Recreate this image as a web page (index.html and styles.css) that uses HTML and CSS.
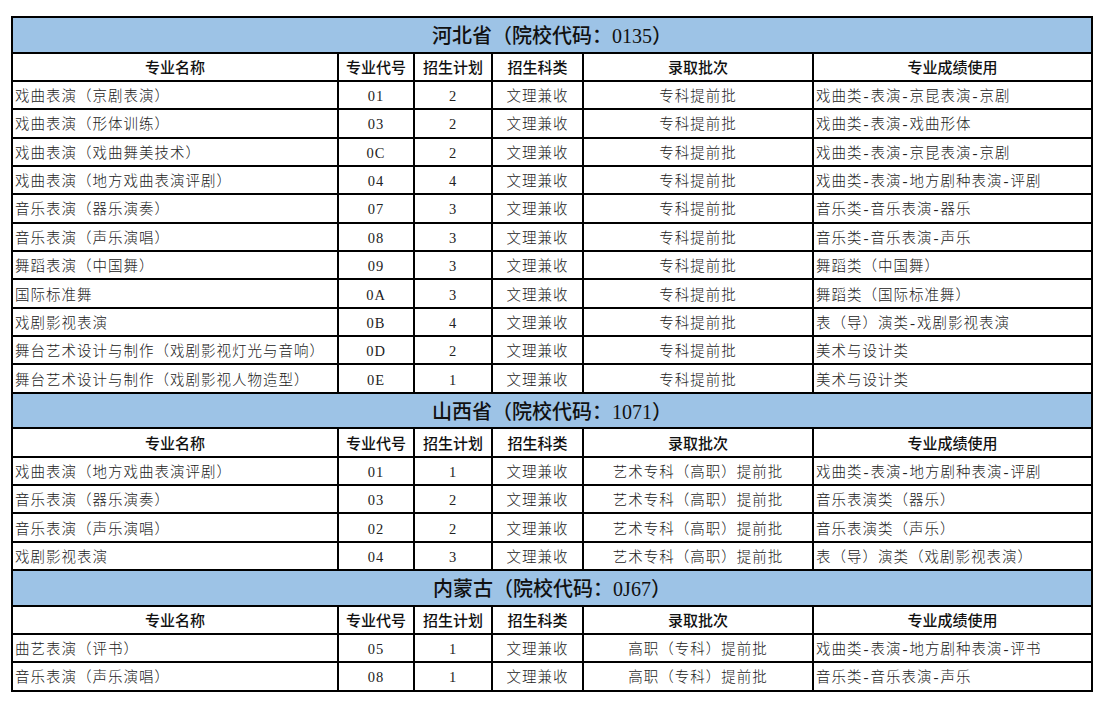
FILE: index.html
```html
<!DOCTYPE html>
<html lang="zh-CN">
<head>
<meta charset="utf-8">
<title>招生计划</title>
<link rel="stylesheet" href="styles.css">
</head>
<body>
<table class="plan">
  <colgroup>
    <col class="c1"><col class="c2"><col class="c3"><col class="c4"><col class="c5"><col class="c6">
  </colgroup>
  <tbody>
    <tr class="prov"><td colspan="6">河北省（院校代码：0135）</td></tr>
    <tr class="head"><td>专业名称</td><td>专业代号</td><td>招生计划</td><td>招生科类</td><td>录取批次</td><td>专业成绩使用</td></tr>
    <tr><td class="l">戏曲表演（京剧表演）</td><td>01</td><td>2</td><td>文理兼收</td><td>专科提前批</td><td class="l">戏曲类<span class="d">-</span>表演<span class="d">-</span>京昆表演<span class="d">-</span>京剧</td></tr>
    <tr><td class="l">戏曲表演（形体训练）</td><td>03</td><td>2</td><td>文理兼收</td><td>专科提前批</td><td class="l">戏曲类<span class="d">-</span>表演<span class="d">-</span>戏曲形体</td></tr>
    <tr><td class="l">戏曲表演（戏曲舞美技术）</td><td>0C</td><td>2</td><td>文理兼收</td><td>专科提前批</td><td class="l">戏曲类<span class="d">-</span>表演<span class="d">-</span>京昆表演<span class="d">-</span>京剧</td></tr>
    <tr><td class="l">戏曲表演（地方戏曲表演评剧）</td><td>04</td><td>4</td><td>文理兼收</td><td>专科提前批</td><td class="l">戏曲类<span class="d">-</span>表演<span class="d">-</span>地方剧种表演<span class="d">-</span>评剧</td></tr>
    <tr><td class="l">音乐表演（器乐演奏）</td><td>07</td><td>3</td><td>文理兼收</td><td>专科提前批</td><td class="l">音乐类<span class="d">-</span>音乐表演<span class="d">-</span>器乐</td></tr>
    <tr><td class="l">音乐表演（声乐演唱）</td><td>08</td><td>3</td><td>文理兼收</td><td>专科提前批</td><td class="l">音乐类<span class="d">-</span>音乐表演<span class="d">-</span>声乐</td></tr>
    <tr><td class="l">舞蹈表演（中国舞）</td><td>09</td><td>3</td><td>文理兼收</td><td>专科提前批</td><td class="l">舞蹈类（中国舞）</td></tr>
    <tr><td class="l">国际标准舞</td><td>0A</td><td>3</td><td>文理兼收</td><td>专科提前批</td><td class="l">舞蹈类（国际标准舞）</td></tr>
    <tr><td class="l">戏剧影视表演</td><td>0B</td><td>4</td><td>文理兼收</td><td>专科提前批</td><td class="l">表（导）演类<span class="d">-</span>戏剧影视表演</td></tr>
    <tr><td class="l">舞台艺术设计与制作（戏剧影视灯光与音响）</td><td>0D</td><td>2</td><td>文理兼收</td><td>专科提前批</td><td class="l">美术与设计类</td></tr>
    <tr><td class="l">舞台艺术设计与制作（戏剧影视人物造型）</td><td>0E</td><td>1</td><td>文理兼收</td><td>专科提前批</td><td class="l">美术与设计类</td></tr>
    <tr class="prov"><td colspan="6">山西省（院校代码：1071）</td></tr>
    <tr class="head"><td>专业名称</td><td>专业代号</td><td>招生计划</td><td>招生科类</td><td>录取批次</td><td>专业成绩使用</td></tr>
    <tr><td class="l">戏曲表演（地方戏曲表演评剧）</td><td>01</td><td>1</td><td>文理兼收</td><td>艺术专科（高职）提前批</td><td class="l">戏曲类<span class="d">-</span>表演<span class="d">-</span>地方剧种表演<span class="d">-</span>评剧</td></tr>
    <tr><td class="l">音乐表演（器乐演奏）</td><td>03</td><td>2</td><td>文理兼收</td><td>艺术专科（高职）提前批</td><td class="l">音乐表演类（器乐）</td></tr>
    <tr><td class="l">音乐表演（声乐演唱）</td><td>02</td><td>2</td><td>文理兼收</td><td>艺术专科（高职）提前批</td><td class="l">音乐表演类（声乐）</td></tr>
    <tr><td class="l">戏剧影视表演</td><td>04</td><td>3</td><td>文理兼收</td><td>艺术专科（高职）提前批</td><td class="l">表（导）演类（戏剧影视表演）</td></tr>
    <tr class="prov"><td colspan="6">内蒙古（院校代码：0J67）</td></tr>
    <tr class="head"><td>专业名称</td><td>专业代号</td><td>招生计划</td><td>招生科类</td><td>录取批次</td><td>专业成绩使用</td></tr>
    <tr><td class="l">曲艺表演（评书）</td><td>05</td><td>1</td><td>文理兼收</td><td>高职（专科）提前批</td><td class="l">戏曲类<span class="d">-</span>表演<span class="d">-</span>地方剧种表演<span class="d">-</span>评书</td></tr>
    <tr><td class="l">音乐表演（声乐演唱）</td><td>08</td><td>1</td><td>文理兼收</td><td>高职（专科）提前批</td><td class="l">音乐类<span class="d">-</span>音乐表演<span class="d">-</span>声乐</td></tr>
  </tbody>
</table>
</body>
</html>
```
FILE: styles.css
```css
html, body {
  margin: 0;
  padding: 0;
  background: #ffffff;
}
body {
  padding: 16px 0 0 11px;
}
.plan {
  border-collapse: collapse;
  table-layout: fixed;
  width: 1082px;
  font-family: "Liberation Serif", "Noto Sans CJK SC", serif;
  font-size: 14.5px;
  letter-spacing: 1px;
  font-weight: 300;
  color: #222;
  text-spacing-trim: space-all;
}
.c1 { width: 326px; }
.c2 { width: 76px; }
.c3 { width: 78px; }
.c4 { width: 91px; }
.c5 { width: 230px; }
.c6 { width: 279px; }
.plan td {
  border: 2px solid #000;
  height: 28.35px;
  padding: 2px 2px 0;
  text-align: center;
  white-space: nowrap;
  overflow: hidden;
  line-height: 20px;
  box-sizing: border-box;
}
.plan td.l {
  text-align: left;
}
.plan .d {
  font-size: 15px;
  margin: 0 1px;
}
.prov td {
  height: 35.6px;
  background: #9dc3e6;
  font-size: 20px;
  letter-spacing: 0;
  font-weight: 500;
  color: #111;
  padding-top: 2px;
  text-spacing-trim: normal;
}
.head td {
  font-family: "Noto Sans CJK SC", sans-serif;
  font-size: 15px;
  letter-spacing: 0;
  font-weight: 500;
  color: #111;
  padding-top: 1px;
}
```
